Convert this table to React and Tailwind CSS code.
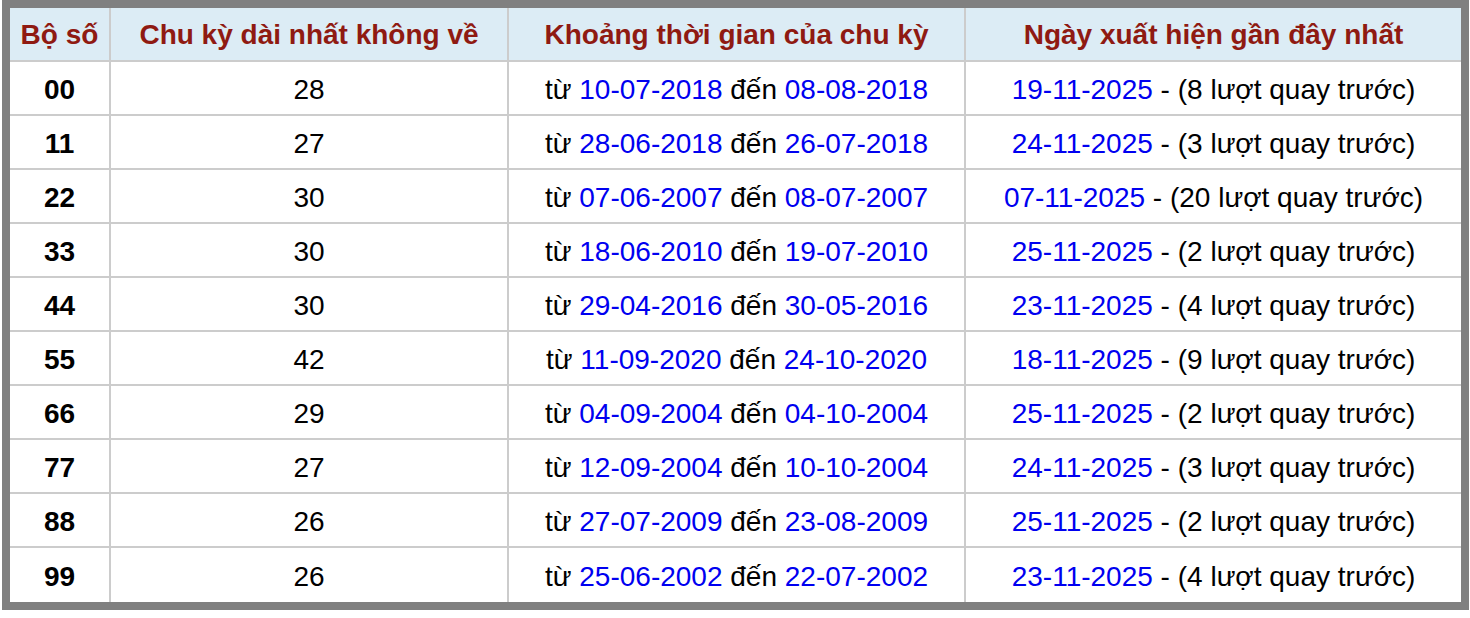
import React from 'react';

// Bảng chu kỳ dài nhất của các bộ số kép
const rows = [
  { bo: '00', chuKy: 28, tu: '10-07-2018', den: '08-08-2018', gan: '19-11-2025', luot: 8 },
  { bo: '11', chuKy: 27, tu: '28-06-2018', den: '26-07-2018', gan: '24-11-2025', luot: 3 },
  { bo: '22', chuKy: 30, tu: '07-06-2007', den: '08-07-2007', gan: '07-11-2025', luot: 20 },
  { bo: '33', chuKy: 30, tu: '18-06-2010', den: '19-07-2010', gan: '25-11-2025', luot: 2 },
  { bo: '44', chuKy: 30, tu: '29-04-2016', den: '30-05-2016', gan: '23-11-2025', luot: 4 },
  { bo: '55', chuKy: 42, tu: '11-09-2020', den: '24-10-2020', gan: '18-11-2025', luot: 9 },
  { bo: '66', chuKy: 29, tu: '04-09-2004', den: '04-10-2004', gan: '25-11-2025', luot: 2 },
  { bo: '77', chuKy: 27, tu: '12-09-2004', den: '10-10-2004', gan: '24-11-2025', luot: 3 },
  { bo: '88', chuKy: 26, tu: '27-07-2009', den: '23-08-2009', gan: '25-11-2025', luot: 2 },
  { bo: '99', chuKy: 26, tu: '25-06-2002', den: '22-07-2002', gan: '23-11-2025', luot: 4 },
];

const headers = ['Bộ số', 'Chu kỳ dài nhất không về', 'Khoảng thời gian của chu kỳ', 'Ngày xuất hiện gần đây nhất'];

const App = () => {
  return (
    <div className="bg-white w-[1470px] h-[618px] font-['Liberation_Sans',Arial,sans-serif] text-[28px] text-black">
      <div className="ml-[2px] w-[1467px] border-[8px] border-[#808080] bg-white">
        <table className="w-full table-fixed border-separate border-spacing-0">
          <colgroup>
            <col className="w-[101px]" />
            <col className="w-[398px]" />
            <col className="w-[457px]" />
            <col />
          </colgroup>
          <thead>
            <tr className="h-[54px] bg-[#dcecf5]">
              {headers.map((h, i) => (
                <th
                  key={h}
                  className={`p-0 pt-[1px] font-bold text-[#8f1a12] text-center border-b-2 border-[#cccccc] ${i < 3 ? 'border-r-2' : ''}`}
                >
                  {h}
                </th>
              ))}
            </tr>
          </thead>
          <tbody>
            {rows.map((r, idx) => {
              const last = idx === rows.length - 1;
              const rowBorder = last ? 'h-[54px] pt-[3px]' : 'h-[54px] pt-[3px] border-b-2';
              return (
                <tr key={r.bo}>
                  <td className={`p-0 text-center font-bold border-r-2 border-[#cccccc] ${rowBorder}`}>{r.bo}</td>
                  <td className={`p-0 text-center border-r-2 border-[#cccccc] ${rowBorder}`}>{r.chuKy}</td>
                  <td className={`p-0 text-center border-r-2 border-[#cccccc] ${rowBorder}`}>
                    từ <span className="text-[#0000f0]">{r.tu}</span> đến <span className="text-[#0000f0]">{r.den}</span>
                  </td>
                  <td className={`p-0 text-center border-[#cccccc] ${rowBorder}`}>
                    <span className="text-[#0000f0]">{r.gan}</span> - ({r.luot} lượt quay trước)
                  </td>
                </tr>
              );
            })}
          </tbody>
        </table>
      </div>
    </div>
  );
};

export default App;
